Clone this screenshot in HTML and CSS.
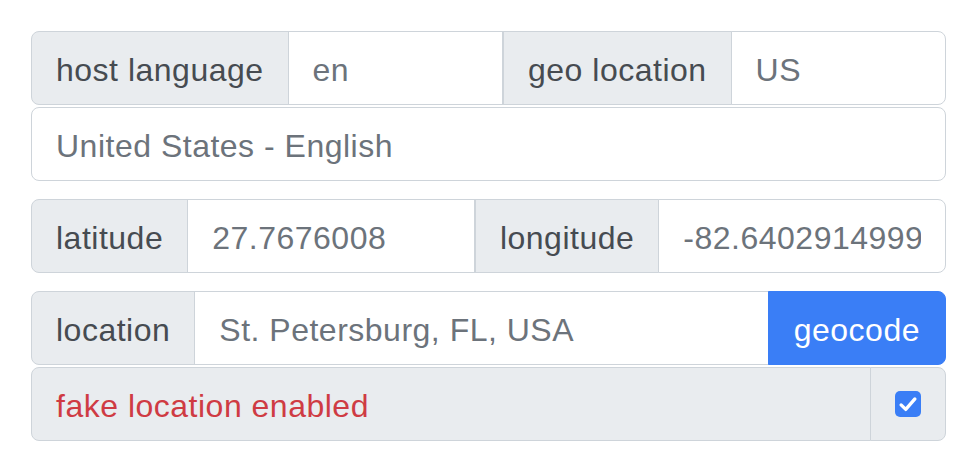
FILE: index.html
```html
<!DOCTYPE html>
<html lang="en">
<head>
<meta charset="utf-8">
<title>Location settings</title>
<link rel="stylesheet" href="styles.css">
</head>
<body>
<div class="panel">
  <div class="block">
    <div class="group">
      <span class="addon first">host language</span>
      <span class="field"><span class="value">en</span></span>
      <span class="addon split">geo location</span>
      <span class="field last"><span class="value">US</span></span>
    </div>
    <div class="group">
      <span class="field single"><span class="value">United States - English</span></span>
    </div>
  </div>
  <div class="block">
    <div class="group">
      <span class="addon first">latitude</span>
      <span class="field"><span class="value">27.7676008</span></span>
      <span class="addon split">longitude</span>
      <span class="field last"><span class="value">-82.64029149999999</span></span>
    </div>
  </div>
  <div class="block">
    <div class="group">
      <span class="addon first">location</span>
      <span class="field"><span class="value">St. Petersburg, FL, USA</span></span>
      <span class="btn last">geocode</span>
    </div>
    <div class="group">
      <span class="addon first grow danger">fake location enabled</span>
      <span class="addon last check-cell">
        <span class="check">
          <svg viewBox="0 0 16 16" width="24" height="24"><path d="M3.4 8.6 L6.5 11.6 L12.6 4.6" fill="none" stroke="#fff" stroke-width="2.2" stroke-linecap="round" stroke-linejoin="round"/></svg>
        </span>
      </span>
    </div>
  </div>
</div>
</body>
</html>
```

FILE: styles.css
```css
* { box-sizing: border-box; }
html, body { margin: 0; padding: 0; background: #fff; }
body {
  font-family: "Liberation Sans", Arial, sans-serif;
  font-size: 32px;
  line-height: 48px;
  letter-spacing: 0.5px;
}
.panel {
  padding: 31px 30px 0 31px;
  display: flex;
  flex-direction: column;
  gap: 18px;
}
.block {
  display: flex;
  flex-direction: column;
  gap: 2px;
}
.group {
  display: flex;
  height: 74px;
}
.addon, .field, .btn {
  display: flex;
  align-items: center;
  padding: 14px 24px 10px;
  border: 1px solid #ced4da;
  white-space: nowrap;
}
.addon {
  background: #e9ecef;
  color: #464b51;
  flex: none;
}
.field {
  background: #fff;
  color: #6c737b;
  flex: 1 1 0;
  min-width: 0;
  margin-left: -1px;
}
.value {
  display: block;
  overflow: hidden;
  min-width: 0;
  width: 100%;
}
.split { margin-left: 0; }
.first { border-radius: 8px 0 0 8px; }
.last { border-radius: 0 8px 8px 0; }
.single { border-radius: 8px; margin-left: 0; }
.btn {
  background: #3a7ef6;
  border-color: #3a7ef6;
  color: #fff;
  flex: none;
  padding: 14px 25px 10px;
  margin-left: -1px;
}
.grow { flex: 1 1 auto; }
.danger { color: #cf3b43; }
.check-cell {
  margin-left: -1px;
  padding: 12px 24px;
  justify-content: center;
}
.check {
  width: 26px;
  height: 26px;
  border-radius: 5px;
  background: #3a7ef6;
  display: flex;
  align-items: center;
  justify-content: center;
}
.check svg { display: block; }
```
